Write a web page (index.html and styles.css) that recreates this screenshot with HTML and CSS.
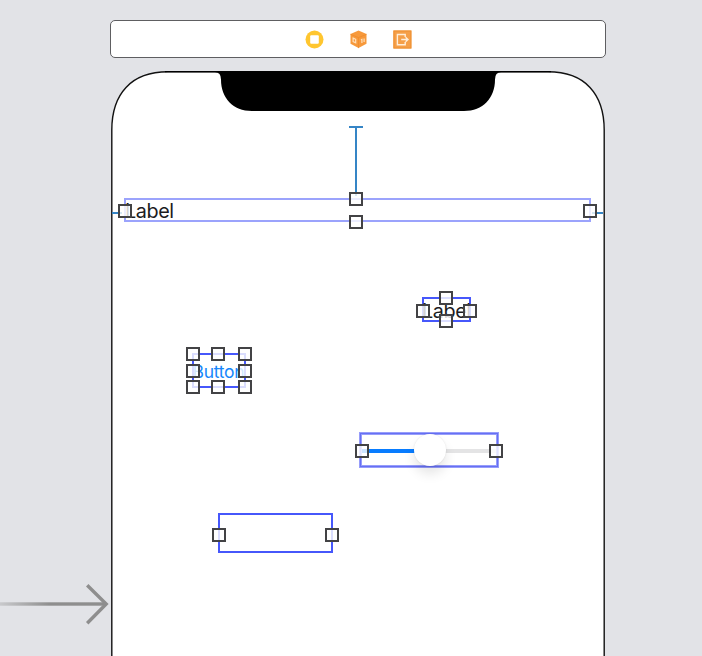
FILE: index.html
```html
<!DOCTYPE html>
<html lang="en">
<head>
<meta charset="utf-8">
<title>View Controller Scene</title>
<link rel="stylesheet" href="styles.css">
</head>
<body>
<main class="canvas">
  <header class="dock">
    <svg class="dock-icon" viewBox="0 0 20 20"><circle cx="10.5" cy="10.5" r="9" fill="#ffc62f"/><rect x="6.2" y="6.2" width="8.6" height="8.6" rx="1" fill="#fff"/></svg>
    <svg class="dock-icon" viewBox="0 0 20 20"><g transform="translate(.5 .5)"><path d="M10 1l8 3.6v9.6L10 18.6l-8-4.4V4.6z" fill="#f7993b"/><path d="M2 4.8l8 3.3 8-3.3M10 8.1v10.5" fill="none" stroke="#ee8c2c" stroke-width=".8"/><path d="M4.6 8.6l2.6 1.2v3.6l-2.6-1.3zM12.4 10.2l1-.4v3.6M15.6 9v3.4" fill="none" stroke="#ffdfba" stroke-width="1.2"/></g></svg>
    <svg class="dock-icon" viewBox="0 0 20 20"><g transform="translate(.4 .5)"><rect x="1" y="1" width="18" height="18" fill="#f59f48"/><rect x="1.5" y="1.5" width="17" height="17" fill="none" stroke="#ee9030"/><path d="M12.8 7.5V5H5v10.2h7.8v-2.7M8.8 10H15M13.2 7.8L15.6 10l-2.4 2.2" fill="none" stroke="#ffeed9" stroke-width="1.4"/></g></svg>
  </header>

  <svg class="device" viewBox="0 0 702 656">
    <path d="M111.8 660V130C111.8 94 131 71.8 168 71.8H548C585 71.8 604.2 94 604.2 130V660" fill="#fff" stroke="#111" stroke-width="1.4"/>
    <path d="M165 71H551V72.2H501Q495 72.2 495 79.5C495 98 483 111 464 111H252C233 111 221 98 221 79.5Q221 72.2 215 72.2H165z" fill="#000"/>
  </svg>

  <svg class="entry" viewBox="0 0 112 44">
    <defs><linearGradient id="fade" gradientUnits="userSpaceOnUse" x1="0" y1="0" x2="50" y2="0"><stop offset="0" stop-color="#8e8e8e" stop-opacity=".3"/><stop offset="1" stop-color="#8e8e8e"/></linearGradient></defs>
    <rect x="0" y="20.3" width="105" height="3.4" fill="url(#fade)"/>
    <path d="M87.2 3.2L106.2 22 87.2 41.2" fill="none" stroke="#8e8e8e" stroke-width="3.4"/>
  </svg>

  <i class="constraint top"></i>
  <i class="constraint leading"></i>
  <i class="constraint trailing"></i>

  <div class="view title"><span>Label</span><i class="handle n"></i><i class="handle s"></i><i class="handle w"></i><i class="handle e"></i></div>
  <div class="view label"><span>Label</span><i class="handle n"></i><i class="handle s"></i><i class="handle w"></i><i class="handle e"></i></div>
  <div class="view button"><span>Button</span><i class="handle n w"></i><i class="handle n"></i><i class="handle n e"></i><i class="handle w"></i><i class="handle e"></i><i class="handle s w"></i><i class="handle s"></i><i class="handle s e"></i></div>
  <div class="view slider"><div class="track"></div><div class="thumb"></div><i class="handle w"></i><i class="handle e"></i></div>
  <div class="view field"><i class="handle w"></i><i class="handle e"></i></div>
</main>
</body>
</html>
```
FILE: styles.css
```css
* { box-sizing: border-box; }
body { margin: 0; background: #e2e3e7; font-family: Inter, "Liberation Sans", sans-serif; }
.canvas { position: relative; width: 702px; height: 656px; overflow: hidden; padding-top: 20px; }
.dock {
  width: 496px; height: 38px; margin-left: 110px;
  display: flex; align-items: center; justify-content: center; gap: 24px;
  background: #fff; border: 1.5px solid #5e5e61; border-radius: 5px;
}
.dock-icon { width: 20px; height: 20px; }
.device { position: absolute; left: 0; top: 0; width: 702px; height: 656px; }
.entry { position: absolute; left: 0; top: 582px; width: 112px; height: 44px; }

.constraint { position: absolute; background: #3585c6; }
.constraint.top { left: 355px; top: 126px; width: 2px; height: 70px; }
.constraint.top::before { content: ""; position: absolute; left: -6px; top: 0; width: 14px; height: 2px; background: #3585c6; }
.constraint.leading { left: 112px; top: 212px; width: 10px; height: 2px; }
.constraint.trailing { left: 592px; top: 212px; width: 11px; height: 2px; }

/* Views placed on the free canvas */
.view { position: absolute; border: 2px solid #4657fb; color: #1c1c1e; --mid-x: 50%; --mid-y: 50%; }
.view span { position: absolute; white-space: nowrap; line-height: 24px; }
.title { left: 124px; top: 198px; width: 467px; height: 24px; border-color: #9ba3fc; --mid-x: calc(50% - 1.5px); --mid-y: calc(50% + 1px); }
.title span { left: -1px; top: -1px; font-size: 19.8px; letter-spacing: -.4px; }
.label { left: 422px; top: 297px; width: 49px; height: 25px; --mid-x: calc(50% - .5px); --mid-y: calc(50% + 1.5px); }
.label span { left: -2px; top: 0; font-size: 19.8px; letter-spacing: -.4px; }
.button { left: 192px; top: 353px; width: 54px; height: 35px; --mid-x: calc(50% - 1px); --mid-y: calc(50% + .5px); }
.button span { left: -1.5px; top: 5px; font-size: 17.5px; letter-spacing: -.3px; color: #1687fb; }
.slider { left: 359px; top: 432px; width: 140px; height: 36px; border: 3px solid #979dfa; --mid-y: calc(50% + 1px); }
.slider::before { content: ""; position: absolute; inset: -2px; border: 1px solid #6670f4; }
.field { left: 218px; top: 513px; width: 115px; height: 40px; --mid-y: calc(50% + 2px); }
.track { position: absolute; left: 0; right: 0; top: 14px; height: 4px; background: linear-gradient(90deg, #087cff 50%, #e4e4e5 50%); }
.thumb { position: absolute; left: 52px; top: -1px; width: 32px; height: 32px; border-radius: 50%; background: #fff; box-shadow: 0 8px 12px rgba(0,0,0,.1), 0 0 2px rgba(0,0,0,.1); }

.handle {
  position: absolute; width: 14px; height: 14px; left: var(--mid-x); top: var(--mid-y);
  transform: translate(-50%, -50%);
  border: 2px solid #434345; background: rgba(255,255,255,.8);
}
.handle.n { top: -1px; }
.handle.s { top: calc(100% + 1px); }
.handle.w { left: -1px; }
.handle.e { left: calc(100% + 1px); }
.title .n { top: -1.5px; }
.title .s { top: calc(100% + 1.5px); }
.slider .w { left: 0; }
.slider .e { left: 100%; }
```
